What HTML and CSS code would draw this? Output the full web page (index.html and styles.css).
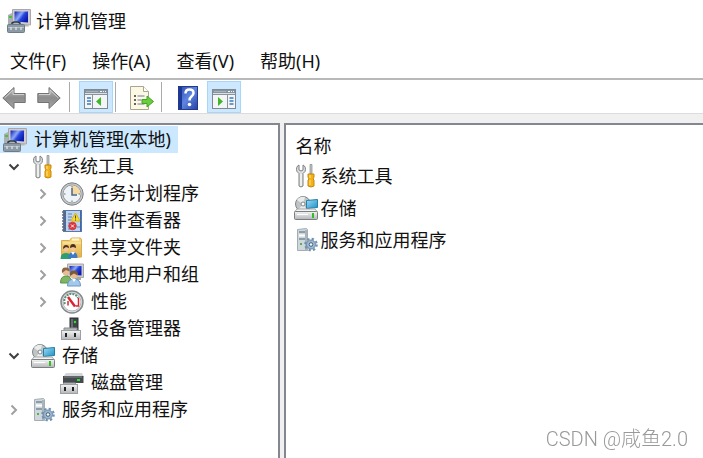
FILE: index.html
```html
<!DOCTYPE html>
<html lang="zh-CN">
<head>
    <meta charset="utf-8">
    <meta name="viewport" content="width=device-width, initial-scale=1">
    <title>计算机管理</title>
    <link rel="stylesheet" href="styles.css">
</head>
<body>
    <!-- shared icons -->
    <svg class="sprite" width="0" height="0" aria-hidden="true">
        <defs>
            <linearGradient id="g-screen" x1="0" y1="0" x2="1" y2="0.6">
                <stop offset="0" stop-color="#0a1fa8"/>
                <stop offset="0.45" stop-color="#8ba8fa"/>
                <stop offset="0.65" stop-color="#2746dc"/>
                <stop offset="1" stop-color="#0b1cae"/>
            </linearGradient>
            <linearGradient id="g-metal" x1="0" y1="0" x2="0" y2="1">
                <stop offset="0" stop-color="#f4f4f4"/>
                <stop offset="1" stop-color="#b4b6b8"/>
            </linearGradient>
            <linearGradient id="g-arrow" x1="0" y1="0" x2="0" y2="1">
                <stop offset="0" stop-color="#bcbcbc"/>
                <stop offset="0.5" stop-color="#8c8c8c"/>
                <stop offset="1" stop-color="#a6a6a6"/>
            </linearGradient>
            <linearGradient id="g-help" x1="0" y1="0" x2="1" y2="1">
                <stop offset="0" stop-color="#2b4bb4"/>
                <stop offset="0.5" stop-color="#5f84e0"/>
                <stop offset="1" stop-color="#2540a4"/>
            </linearGradient>
            <linearGradient id="g-folder" x1="0" y1="0" x2="0" y2="1">
                <stop offset="0" stop-color="#f7dc86"/>
                <stop offset="1" stop-color="#e2b04a"/>
            </linearGradient>
            <linearGradient id="g-blue" x1="0" y1="0" x2="1" y2="1">
                <stop offset="0" stop-color="#9ddcf5"/>
                <stop offset="1" stop-color="#1c8fc4"/>
            </linearGradient>
        </defs>

        <symbol id="i-computer" viewBox="0 0 24 24">
            <path d="M5.500.5h18v15.500l-18-1.500z" fill="#cfcdd2" stroke="#aaa8ab"/>
            <path d="M7.500 2.500h13.500v11l-13.500-1z" fill="url(#g-screen)"/>
            <path d="M13 15.500h8l1 2h-9z" fill="#b9b8ae"/>
            <path d="M1 6l4-2v12H1z" fill="#a9b0b5"/>
            <path d="M2 8h3" stroke="#4fbf3a" stroke-width="2"/>
            <path d="M5 16v-2l2-1h4l2 1v2" fill="none" stroke="#2c3a44" stroke-width="1.500"/>
            <rect x=".5" y="15.500" width="17" height="8" rx="1" fill="#8b9aa5" stroke="#6d7c88"/>
            <path d="M1 18.500h16" stroke="#b4bfc6"/>
            <path d="M4 18v3M9 18v3M14 18v3" stroke="#d5dce0" stroke-width="1.500"/>
        </symbol>

        <symbol id="i-tools" viewBox="0 0 24 24">
            <path d="M5 1C2.500 2 2 5 3 7.500l2 2V22q2 2 4 0V9.500l2-2C12 5 11.500 2 9 1v5L7 7 5 6z" fill="#dcdedf" stroke="#7c7f80"/>
            <path d="M7 10v12" stroke="#fff"/>
            <path d="M16 .5h2V10h-2z" fill="#c4c6c7" stroke="#85888a" stroke-width=".7"/>
            <path d="M14 10h6v3l-1 2 1 1v6q-3 2-6 0v-6l1-1-1-2z" fill="#f2b21c" stroke="#c98709"/>
            <path d="M16 11v3m0 2v5" stroke="#ffe488"/>
        </symbol>

        <symbol id="i-clock" viewBox="0 0 24 24">
            <circle cx="12" cy="12" r="11.200" fill="#c6c8ca" stroke="#7c8084"/>
            <circle cx="12" cy="12" r="9" fill="#eef3f8" stroke="#989c9f"/>
            <path d="M12 12V3.500A8.500 8.500 0 0 1 20.500 12z" fill="#f5d9a0"/>
            <path d="M12 4v1.500M12 18.500V20M4 12h1.500M18.500 12H20" stroke="#6b7278"/>
            <path d="M12 6v7h5" fill="none" stroke="#4c6580" stroke-width="1.500"/>
        </symbol>

        <symbol id="i-events" viewBox="0 0 24 24">
            <rect x="3.500" y="1.500" width="18" height="21" fill="#3f69ab" stroke="#5578ad"/>
            <path d="M6 2h14v20H6z" fill="#bdd2ee"/>
            <path d="M8 5h4M8 8h4M8 11h3M8 14h2M8 20h2M17 18h3" stroke="#5f82b8"/>
            <path d="M2 3h4M2 6h4M2 9h4M2 12h4M2 15h4M2 18h4M2 21h4" stroke="#646c76" stroke-width="1.500"/>
            <path d="M15.500 4l4.500 8h-9z" fill="#f7dc2d" stroke="#d8b516"/>
            <path d="M15.500 6.500v3m0 1v1" stroke="#54480a"/>
            <circle cx="12.500" cy="17" r="3.800" fill="#e0313b" stroke="#c9444d"/>
            <path d="M11 15.500l3 3m0-3l-3 3" stroke="#fff"/>
        </symbol>

        <symbol id="i-share" viewBox="0 0 24 24">
            <path d="M1.500 4.500h8l2-2.500h9l1 2v17l-20 1z" fill="url(#g-folder)" stroke="#d9ac4e"/>
            <path d="M12 3.500h7" stroke="#fff8d8" stroke-width="2"/>
            <path d="M3 7h18" stroke="#fbeaae"/>
            <circle cx="6" cy="13" r="2.500" fill="#f1c49b"/>
            <path d="M3 13q0-4 3-4t3 3l-3-1z" fill="#4e301b"/>
            <path d="M.5 23q0-6 5.500-6t5 6z" fill="#2b9e76"/>
            <circle cx="13" cy="12.500" r="2.500" fill="#f1c49b"/>
            <path d="M10 12q0-4 3-4t3 4l-3-1z" fill="#4e301b"/>
            <path d="M8.500 22q0-6 4.500-6t4.500 6z" fill="#3d79c8"/>
            <path d="M11 16l2 3 2-3" fill="#fff"/>
        </symbol>

        <symbol id="i-users" viewBox="0 0 24 24">
            <path d="M7.500 1h16v13.500l-16-1z" fill="#cfcdd2" stroke="#a9a8ab"/>
            <path d="M9.500 3h12v9.500l-12-1z" fill="url(#g-screen)"/>
            <path d="M15 14h6v3h-6z" fill="#aaa99f"/>
            <circle cx="6" cy="9" r="3.500" fill="#e9bd93"/>
            <path d="M2 10q-1-6 4-5.500 4 0 3.500 4L6 7z" fill="#8a6740"/>
            <path d="M.5 20q0-7 5.500-7t5 7z" fill="#7fb563" stroke="#5a9443"/>
            <circle cx="14" cy="12" r="3.500" fill="#e9bd93"/>
            <path d="M10 13q-1-6 4-5.500 4.500 0 3.500 5l-3.500-2z" fill="#7d5833"/>
            <path d="M7.500 23q0-7 6.500-7t6.500 7z" fill="#a3c8ea" stroke="#6598c8"/>
            <path d="M12 16l2 3 2-3z" fill="#fff"/>
        </symbol>

        <symbol id="i-perf" viewBox="0 0 24 24">
            <circle cx="12" cy="12" r="11" fill="#dfe1e2" stroke="#85898c" stroke-width="1.500"/>
            <circle cx="12" cy="12" r="9" fill="#fff" stroke="#b4b8ba"/>
            <path d="M5 14a7 7 0 0 1 13-6" fill="none" stroke="#5f8f78" stroke-width="2" stroke-dasharray="2 1"/>
            <path d="M18.500 8v8h-3" fill="none" stroke="#d92532" stroke-width="1.500"/>
            <path d="M8 7l7 9.500" fill="none" stroke="#d92532" stroke-width="2.500"/>
            <path d="M8 11v4.500" stroke="#d92532" stroke-width="1.500"/>
        </symbol>

        <symbol id="i-device" viewBox="0 0 24 24">
            <rect x="10" y="1" width="8" height="13" fill="#3f4447" stroke="#2c3033"/>
            <path d="M11 2h2v9h-2z" fill="#666b6e"/>
            <circle cx="15" cy="5" r="1.200" fill="#35e034"/>
            <path d="M4 11h13v4H4z" fill="#b6b9bb" stroke="#898d90"/>
            <rect x="1.500" y="13.500" width="19" height="9" fill="url(#g-metal)" stroke="#9da0a2"/>
            <path d="M5 16h2v4H5zM14 16h2v4h-2z" fill="#1f2223"/>
        </symbol>

        <symbol id="i-storage" viewBox="0 0 24 24">
            <circle cx="9" cy="8" r="7.500" fill="#bfc4c6" stroke="#7f8487"/>
            <path d="M9 8L3 4q3-4 8-3zM9 8l4 6q-5 3-9 0z" fill="#e9ecec"/>
            <circle cx="9" cy="8" r="2" fill="#fff" stroke="#80878a"/>
            <path d="M12.500 4.500l11-1v8l-11 1z" fill="url(#g-blue)" stroke="#257ea8"/>
            <path d="M3 13h18l2.500 3H.5z" fill="#f4f4f3" stroke="#a5a7a7"/>
            <rect x=".5" y="15.500" width="23" height="8" rx="1" fill="url(#g-metal)" stroke="#7b7f81"/>
            <path d="M3 18.500h11" stroke="#fff"/>
            <path d="M18 17h2v5h-2z" fill="#32bf25"/>
        </symbol>

        <symbol id="i-disk" viewBox="0 0 24 24">
            <path d="M6 2h16l2 4H3z" fill="#d3d6d7"/>
            <rect x="3" y="5" width="20.500" height="7" fill="#454a4d"/>
            <path d="M4 6h18" stroke="#81878a"/>
            <path d="M17 9h3" stroke="#33dd35" stroke-width="2"/>
            <path d="M3.500 12h12v3h-12z" fill="#c5c8ca" stroke="#989b9d"/>
            <rect x=".5" y="13.500" width="17" height="9" fill="url(#g-metal)" stroke="#9da0a2"/>
            <path d="M4 16h2v4H4zM12 16h2v4h-2z" fill="#1f2223"/>
        </symbol>

        <symbol id="i-services" viewBox="0 0 24 24">
            <path d="M3.500 1.500l9-1 1 1v21h-10z" fill="#d0d7dc" stroke="#a4adb3"/>
            <path d="M11 2h2v20h-2z" fill="#a9b4bb"/>
            <path d="M5 4h6M5 11h6" stroke="#46647a"/>
            <path d="M5 7.500h6" stroke="#fff" stroke-width="2"/>
            <path d="M6 16h2" stroke="#51b447" stroke-width="2"/>
            <circle cx="17" cy="16.500" r="5.800" fill="none" stroke="#6f90ae" stroke-width="2" stroke-dasharray="2.300 2.250"/>
            <circle cx="17" cy="16.500" r="4.500" fill="#9cb7cf" stroke="#6a8baa"/>
            <circle cx="17" cy="16.500" r="1.800" fill="#f4f8fb" stroke="#46627a"/>
        </symbol>

        <symbol id="i-arrow" viewBox="0 0 24 24">
            <path d="M.8 12L12 1.500V7.500h11.200v9H12v6z" fill="url(#g-arrow)" stroke="#737373" stroke-linejoin="round"/>
            <path d="M2.500 12L11 4v4.500h11" fill="none" stroke="#d0d0d0"/>
        </symbol>

        <symbol id="i-window" viewBox="0 0 24 24">
            <rect x=".5" y="3.500" width="23" height="19" fill="#f4f5f6" stroke="#808992"/>
            <path d="M1 4h22v5H1z" fill="#8793a1"/>
            <path d="M1 7.500h22" stroke="#dce1e5"/>
            <path d="M16 5.500h2M19 5.500h1M21 5.500h1" stroke="#f5f6f7"/>
            <path d="M2 5.500h12" stroke="#a8b2bd"/>
            <path d="M8.500 9v13" stroke="#8b939b"/>
            <path d="M3 12h4M3 15h4M3 18h4" stroke="#387cbe" stroke-width="1.500"/>
            <path d="M17 11v9l-5-4.500z" fill="#3db928"/>
        </symbol>

        <symbol id="i-window-right" viewBox="0 0 24 24">
            <rect x=".5" y="3.500" width="23" height="19" fill="#f4f5f6" stroke="#808992"/>
            <path d="M1 4h22v5H1z" fill="#8793a1"/>
            <path d="M1 7.500h22" stroke="#dce1e5"/>
            <path d="M16 5.500h2M19 5.500h1M21 5.500h1" stroke="#f5f6f7"/>
            <path d="M2 5.500h12" stroke="#a8b2bd"/>
            <path d="M15.500 9v13" stroke="#8b939b"/>
            <path d="M17.500 12h4M17.500 15h4M17.500 18h4" stroke="#387cbe" stroke-width="1.500"/>
            <path d="M6 11v9l5-4.500z" fill="#3db928"/>
        </symbol>

        <symbol id="i-export" viewBox="0 0 24 24">
            <path d="M.5.500h13l5 5v18H.5z" fill="#fbf8e4" stroke="#aaa58f"/>
            <path d="M13.500.500v5h5" fill="#fff" stroke="#aaa58f"/>
            <path d="M4 10h2M4 14h2M4 18h2" stroke="#333" stroke-width="1.500"/>
            <path d="M7.500 10h7M7.500 14h4M7.500 18h7" stroke="#77779a"/>
            <path d="M12 13.500h5V10l6.500 5.500L17 21v-3.500h-5z" fill="#6ccc40" stroke="#43a424"/>
        </symbol>

        <symbol id="i-help" viewBox="0 0 24 24">
            <rect x="2.500" y=".5" width="19" height="23" fill="url(#g-help)" stroke="#223a8c"/>
            <path d="M3 1h3v22H3z" fill="#1c3794"/>
            <path d="M9.500 7.500q0-4 4-4t4 3.500q0 2-2 3.500t-2 4" fill="none" stroke="#fff" stroke-width="2.500"/>
            <circle cx="13.500" cy="18.500" r="1.800" fill="#fff"/>
        </symbol>

        <symbol id="i-chevron" viewBox="0 0 12 12">
            <path d="M3.500 1.500L8 6l-4.500 4.500" fill="none" stroke="currentColor" stroke-width="2"/>
        </symbol>
    </svg>

    <header class="titlebar">
        <svg class="icon"><use href="#i-computer"/></svg>
        <h1>计算机管理</h1>
    </header>

    <nav class="menu">
        <button type="button">文件(F)</button>
        <button type="button">操作(A)</button>
        <button type="button">查看(V)</button>
        <button type="button">帮助(H)</button>
    </nav>

    <div class="toolbar">
        <div class="history">
            <button type="button" aria-label="后退"><svg class="icon"><use href="#i-arrow"/></svg></button>
            <button type="button" aria-label="前进"><svg class="icon flip"><use href="#i-arrow"/></svg></button>
        </div>
        <span class="sep"></span>
        <button type="button" class="tool active" aria-label="显示/隐藏控制台树"><svg class="icon"><use href="#i-window"/></svg></button>
        <span class="sep"></span>
        <button type="button" class="tool" aria-label="导出列表"><svg class="icon"><use href="#i-export"/></svg></button>
        <span class="sep"></span>
        <button type="button" class="tool" aria-label="帮助"><svg class="icon"><use href="#i-help"/></svg></button>
        <button type="button" class="tool active last" aria-label="显示/隐藏操作窗格"><svg class="icon"><use href="#i-window-right"/></svg></button>
    </div>

    <main class="panes">
        <section class="pane tree">
            <a href="#" class="node root"><svg class="icon"><use href="#i-computer"/></svg>计算机管理(本地)</a>
            <ul>
                <li>
                    <div class="row">
                        <button type="button" class="toggle open" aria-label="折叠"><svg><use href="#i-chevron"/></svg></button>
                        <a href="#" class="node"><svg class="icon"><use href="#i-tools"/></svg>系统工具</a>
                    </div>
                    <ul>
                        <li class="row">
                            <button type="button" class="toggle" aria-label="展开"><svg><use href="#i-chevron"/></svg></button>
                            <a href="#" class="node"><svg class="icon"><use href="#i-clock"/></svg>任务计划程序</a>
                        </li>
                        <li class="row">
                            <button type="button" class="toggle" aria-label="展开"><svg><use href="#i-chevron"/></svg></button>
                            <a href="#" class="node"><svg class="icon"><use href="#i-events"/></svg>事件查看器</a>
                        </li>
                        <li class="row">
                            <button type="button" class="toggle" aria-label="展开"><svg><use href="#i-chevron"/></svg></button>
                            <a href="#" class="node"><svg class="icon"><use href="#i-share"/></svg>共享文件夹</a>
                        </li>
                        <li class="row">
                            <button type="button" class="toggle" aria-label="展开"><svg><use href="#i-chevron"/></svg></button>
                            <a href="#" class="node"><svg class="icon"><use href="#i-users"/></svg>本地用户和组</a>
                        </li>
                        <li class="row">
                            <button type="button" class="toggle" aria-label="展开"><svg><use href="#i-chevron"/></svg></button>
                            <a href="#" class="node"><svg class="icon"><use href="#i-perf"/></svg>性能</a>
                        </li>
                        <li class="row leaf">
                            <a href="#" class="node"><svg class="icon"><use href="#i-device"/></svg>设备管理器</a>
                        </li>
                    </ul>
                </li>
                <li>
                    <div class="row">
                        <button type="button" class="toggle open" aria-label="折叠"><svg><use href="#i-chevron"/></svg></button>
                        <a href="#" class="node"><svg class="icon"><use href="#i-storage"/></svg>存储</a>
                    </div>
                    <ul>
                        <li class="row leaf">
                            <a href="#" class="node"><svg class="icon"><use href="#i-disk"/></svg>磁盘管理</a>
                        </li>
                    </ul>
                </li>
                <li class="row">
                    <button type="button" class="toggle" aria-label="展开"><svg><use href="#i-chevron"/></svg></button>
                    <a href="#" class="node"><svg class="icon"><use href="#i-services"/></svg>服务和应用程序</a>
                </li>
            </ul>
        </section>

        <section class="pane content">
            <table>
                <thead>
                    <tr><th>名称</th></tr>
                </thead>
                <tbody>
                    <tr><td><a href="#"><svg class="icon"><use href="#i-tools"/></svg>系统工具</a></td></tr>
                    <tr><td><a href="#"><svg class="icon"><use href="#i-storage"/></svg>存储</a></td></tr>
                    <tr><td><a href="#"><svg class="icon"><use href="#i-services"/></svg>服务和应用程序</a></td></tr>
                </tbody>
            </table>
        </section>
    </main>

    <p class="watermark">CSDN @咸鱼2.0</p>
</body>
</html>
```
FILE: styles.css
```css
* {
    box-sizing: border-box;
}

body {
    display: flex;
    flex-direction: column;
    min-height: 100vh;
    margin: 0;
    background: #fff;
    color: #111;
    font: 18px/27px "Noto Sans", "Noto Sans CJK SC", sans-serif;
}

button {
    padding: 0;
    border: 0;
    background: none;
    color: inherit;
    font: inherit;
}

a {
    color: inherit;
    text-decoration: none;
}

ul {
    margin: 0;
    padding: 0;
    list-style: none;
}

.sprite {
    position: absolute;
}

.icon {
    flex: none;
    display: block;
    width: 24px;
    height: 24px;
}

.flip {
    transform: scaleX(-1);
}

/* title and menu */
.titlebar {
    display: flex;
    align-items: center;
    gap: 5px;
    height: 42px;
    padding: 0 7px;
}

.titlebar h1 {
    margin: 0;
    font-size: 18px;
    font-weight: normal;
}

.menu {
    display: flex;
    align-items: center;
    gap: 26px;
    height: 38px;
    padding: 2px 10px 0;
    border-bottom: 2px solid #b9b9b9;
}

/* toolbar */
.toolbar {
    display: flex;
    align-items: center;
    height: 34px;
    padding: 1px 0 0 2px;
    border-bottom: 1px solid #dcdcdc;
}

.history {
    display: flex;
    gap: 11px;
    padding: 2px 6px 0 0;
}

.sep {
    width: 1px;
    height: 30px;
    margin: 0 9px 0 2px;
    background: #aaa;
}

.tool {
    display: flex;
    align-items: center;
    justify-content: center;
    width: 34px;
    height: 32px;
    padding-top: 2px;
    border: 1px solid transparent;
}

.tool.active {
    border-color: #a9d5f7;
    background: #cce8ff;
}

.tool.last {
    margin-left: 2px;
}

/* panes */
.panes {
    flex: 1;
    display: grid;
    grid-template-columns: 2fr 3fr;
    gap: 4px;
    padding-top: 9px;
    background: #f0f0f0;
}

.pane {
    border: 2px solid #828790;
    border-bottom: 0;
    background: #fff;
}

.tree {
    padding-top: 1px;
    border-left: 0;
}

.content {
    padding: 8px;
    border-right: 0;
}

.node {
    display: flex;
    align-items: center;
    gap: 7px;
}

.root {
    width: fit-content;
    padding: 0 7px 0 3px;
    background: #cce8ff;
}

.row {
    display: flex;
    align-items: center;
    height: 27px;
    padding-left: 8px;
}

.tree ul ul {
    padding-left: 29px;
}

.toggle {
    width: 12px;
    height: 12px;
    margin-right: 11px;
    color: #a0a0a0;
}

.toggle svg {
    display: block;
    width: 12px;
    height: 12px;
}

.toggle.open {
    color: #404040;
    transform: rotate(90deg);
}

.leaf {
    padding-left: 31px;
}

/* list on the right */
table {
    width: 100%;
    border-collapse: collapse;
}

th {
    padding: 0 2px;
    font-weight: normal;
    text-align: left;
}

td {
    padding: 0;
}

td a {
    display: flex;
    align-items: center;
    gap: 3px;
    height: 32px;
}

.watermark {
    position: fixed;
    right: 15px;
    bottom: 5px;
    margin: 0;
    color: #999;
    font: 300 20px/27px Roboto, "Noto Sans CJK SC", sans-serif;
}
```
